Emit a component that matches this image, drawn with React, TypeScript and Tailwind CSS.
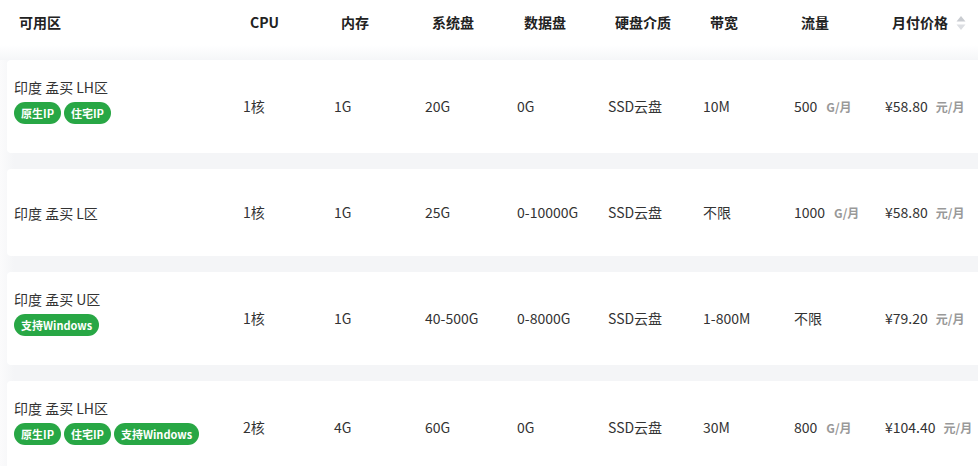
import React from "react";

type Row = {
  zone: string;
  tags: string[];
  cpu: string;
  mem: string;
  sys: string;
  data: string;
  media: string;
  bw: string;
  traffic: string;
  trafficUnit?: boolean;
  price: string;
  h: string;
};

const rows: Row[] = [
  { zone: "印度 孟买 LH区", tags: ["原生IP", "住宅IP"], cpu: "1核", mem: "1G", sys: "20G", data: "0G", media: "SSD云盘", bw: "10M", traffic: "500", trafficUnit: true, price: "¥58.80", h: "h-[93px]" },
  { zone: "印度 孟买 L区", tags: [], cpu: "1核", mem: "1G", sys: "25G", data: "0-10000G", media: "SSD云盘", bw: "不限", traffic: "1000", trafficUnit: true, price: "¥58.80", h: "h-[87px]" },
  { zone: "印度 孟买 U区", tags: ["支持Windows"], cpu: "1核", mem: "1G", sys: "40-500G", data: "0-8000G", media: "SSD云盘", bw: "1-800M", traffic: "不限", price: "¥79.20", h: "h-[93px]" },
  { zone: "印度 孟买 LH区", tags: ["原生IP", "住宅IP", "支持Windows"], cpu: "2核", mem: "4G", sys: "60G", data: "0G", media: "SSD云盘", bw: "30M", traffic: "800", trafficUnit: true, price: "¥104.40", h: "h-[93px]" },
];

const headers = ["可用区", "CPU", "内存", "系统盘", "数据盘", "硬盘介质", "带宽", "流量"];

function SortIcon() {
  return (
    <svg width="10" height="16" viewBox="0 0 10 16" className="ml-[8px]">
      <path d="M5 1 L9.5 6.5 L0.5 6.5 Z" fill="#c9ccd1" />
      <path d="M5 15 L9.5 9.5 L0.5 9.5 Z" fill="#dcdee2" />
    </svg>
  );
}

export default function App() {
  return (
    <div
      className="w-[978px] h-[466px] overflow-hidden bg-white text-[14px] text-[#333]"
      style={{ fontFamily: '"Noto Sans CJK SC", "Noto Sans", sans-serif' }}
    >
      <div className="grid h-[45px] grid-cols-[231px_91px_91px_92px_91px_95px_91px_91px_1fr] items-center pl-[19px] font-bold text-[#222]">
        {headers.map((h) => (
          <div key={h}>{h}</div>
        ))}
        <div className="flex items-center">
          月付价格
          <SortIcon />
        </div>
      </div>

      <div className="h-[15px] bg-gradient-to-b from-white to-[#f5f6f8]" />

      <div className="flex w-[1010px] flex-col gap-[16px] bg-[linear-gradient(to_right,#fbfbfc,#f4f5f7_14px)] pb-[16px] pl-[7px]">
        {rows.map((r, i) => (
          <div
            key={i}
            className={`${r.h} grid grid-cols-[229px_91px_91px_92px_91px_95px_91px_91px_1fr] items-center rounded-[4px] bg-white pl-[7px]`}
          >
            <div className={`flex flex-col ${r.tags.length ? "pb-[12px]" : ""}`}>
              <div className="leading-[20px]">{r.zone}</div>
              {r.tags.length > 0 && (
                <div className="mt-[5px] flex gap-[3px]">
                  {r.tags.map((t) => (
                    <span
                      key={t}
                      className="flex h-[22px] items-center rounded-full bg-[#28a745] px-[7px] text-[11px] font-bold text-white"
                    >
                      {t}
                    </span>
                  ))}
                </div>
              )}
            </div>
            <div>{r.cpu}</div>
            <div>{r.mem}</div>
            <div>{r.sys}</div>
            <div>{r.data}</div>
            <div>{r.media}</div>
            <div>{r.bw}</div>
            <div className="flex items-center">
              {r.traffic}
              {r.trafficUnit && (
                <span className="ml-[9px] text-[12px] font-bold text-[#999]">G/月</span>
              )}
            </div>
            <div className="flex items-center">
              {r.price}
              <span className="ml-[8px] text-[12px] font-bold text-[#999]">元/月</span>
            </div>
          </div>
        ))}
      </div>
    </div>
  );
}
